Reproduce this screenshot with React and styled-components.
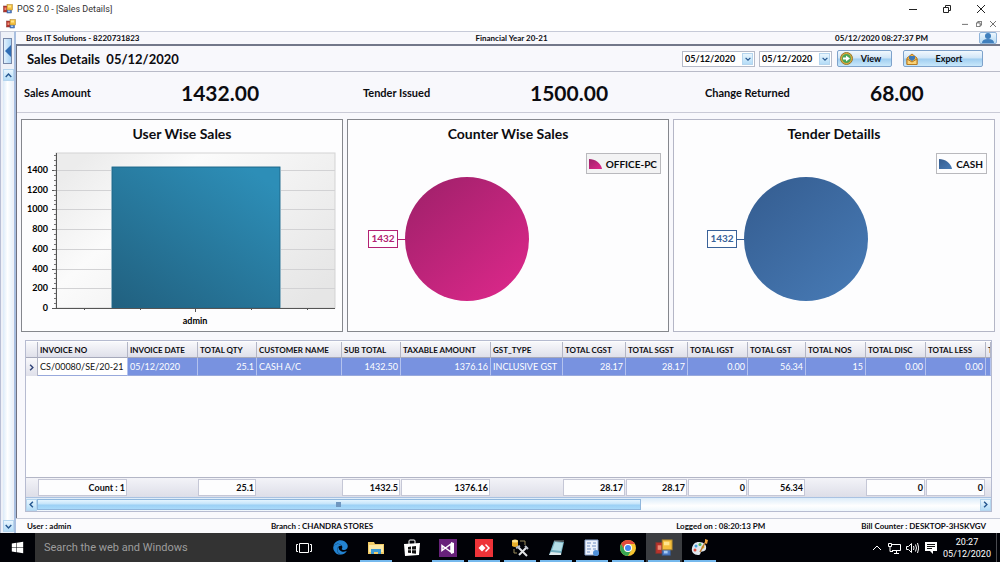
import React from "react";
import styled, { createGlobalStyle, css } from "styled-components";
import { FaEdge, FaWindows } from "react-icons/fa";

const GlobalStyle = createGlobalStyle`
  * {
    box-sizing: border-box;
  }
  body {
    margin: 0;
    background: #f8f8fc;
    color: #0c0c10;
    font: 700 9px/12px Lato, "Open Sans", sans-serif;
  }
  button, input {
    font: inherit;
    color: inherit;
    margin: 0;
  }
  svg {
    display: block;
  }
`;

const SPage = styled.div`
  min-height: 100vh;
  display: flex;
  flex-direction: column;
`;

const STitleBar = styled.header`
  display: flex;
  align-items: center;
  justify-content: space-between;
  height: 17px;
  padding: 0 13px 0 3px;
  background: #fff;
  font: 400 9px/12px Roboto, "Open Sans", sans-serif;
  color: #333;
`;

const SAppName = styled.div`
  display: flex;
  align-items: center;
  gap: 4px;
`;

const SWindowButtons = styled.div`
  display: flex;
  align-items: center;
  gap: ${({ $small }) => ($small ? 2 : 22)}px;
`;

const SWindowButton = styled.button`
  display: flex;
  align-items: center;
  justify-content: center;
  width: 12px;
  height: 12px;
  padding: 0;
  border: none;
  background: transparent;
`;

const SMdiBar = styled(STitleBar)`
  height: 14px;
  padding: 0 1px 0 6px;
`;

const SWorkspace = styled.div`
  flex: 1;
  display: flex;
`;

const SSideBar = styled.aside`
  display: flex;
  flex-direction: column;
  width: 16px;
  padding: 6px 2px 1px 2px;
  background: #eef1f8;
  border-left: 1px solid #b9bfd6;
  border-right: 2px solid #a9bfe0;
  border-top: 1px solid #c6cad8;
`;

const SCollapseButton = styled.button`
  display: flex;
  align-items: center;
  justify-content: center;
  height: 26px;
  margin-bottom: 5px;
  padding: 0;
  border: 1px solid #7787a8;
  background: linear-gradient(90deg, #e2f1fd, #a9d3f5);
`;

const SScrollArrow = styled.button`
  display: flex;
  align-items: center;
  justify-content: center;
  width: 11px;
  height: 12px;
  padding: 0;
  border: 1px solid #b5d5ee;
  background: linear-gradient(#e9f6fe, #b4dcf7);
  color: #24568f;
`;

const SSideTrack = styled.div`
  flex: 1;
  background: linear-gradient(90deg, #dcebf9, #ffffff 50%, #eaf4fc);
`;

const SMain = styled.main`
  flex: 1;
  min-width: 0;
  display: flex;
  flex-direction: column;
  border-top: 1px solid #c6cad8;
`;

const SInfoBar = styled.div`
  display: grid;
  grid-template-columns: 1fr auto 1fr;
  align-items: center;
  height: 12px;
  padding: 0 3px 0 10px;
  font-size: 8px;
`;

const SInfoRight = styled.div`
  display: flex;
  align-items: center;
  justify-content: flex-end;
  gap: 51px;
`;

const SUserButton = styled.button`
  display: flex;
  justify-content: center;
  width: 18px;
  height: 12px;
  padding: 0;
  border: 1px solid #8fb4da;
  border-radius: 2px;
  background: linear-gradient(#edf6fd, #b6daf4);
`;

const SForm = styled.section`
  flex: 1;
  display: flex;
  flex-direction: column;
  border-top: 2px solid #73788a;
  border-left: 1px solid #6d7080;
`;

const SToolbar = styled.div`
  display: flex;
  align-items: center;
  justify-content: space-between;
  height: 26px;
  padding: 0 17px 0 10px;
  border-bottom: 1px solid #b9bbc8;
`;

const SHeading = styled.h1`
  margin: 0;
  font-size: 13px;
  line-height: 18px;
  white-space: pre;
`;

const STools = styled.div`
  display: flex;
  align-items: center;
`;

const SDateBox = styled.div`
  display: flex;
  align-items: center;
  width: 73px;
  height: 16px;
  margin-right: 4px;
  padding: 1px;
  border: 1px solid #b5bac8;
  background: #fff;

  input {
    flex: 1;
    min-width: 0;
    padding: 0 1px;
    border: none;
    outline: none;
    background: transparent;
  }
`;

const SActionButton = styled.button`
  display: flex;
  align-items: center;
  width: ${({ $wide }) => ($wide ? 80 : 55)}px;
  height: 17px;
  margin-left: ${({ $wide }) => ($wide ? 11 : 1)}px;
  padding: 0 2px;
  border: 1px solid #7ea2cb;
  border-radius: 2px;
  background: linear-gradient(#f1f8fe, #cfe5f7 48%, #9fcdf0 52%, #c9e8fb);

  span {
    flex: 1;
    text-align: center;
  }
`;

const SSummary = styled.dl`
  display: grid;
  grid-template-columns: 157fr 182fr 167fr 175fr 165fr 122fr;
  align-items: center;
  height: 41px;
  margin: 0;
  padding: 2px 8px 0 7px;
  border-bottom: 1px solid #c9cad6;

  dt {
    font-size: 11px;
    line-height: 14px;
  }
  dd {
    margin: 0;
    font-size: 21px;
    line-height: 26px;
  }
`;

const SCharts = styled.div`
  display: flex;
  gap: 4px;
  padding: 6px 5px 0 4px;
`;

const SChartPanel = styled.section`
  flex: 1;
  min-width: 0;
  height: 213px;
  border: 1px solid ${({ $light }) => ($light ? "#b4b6c6" : "#85878d")};
  background: #fdfdfe;
`;

const SChartTitle = styled.h2`
  margin: 0;
  padding-top: 4px;
  height: 28px;
  font-size: 14px;
  line-height: 20px;
  text-align: center;
`;

const SPieArea = styled.div`
  display: flex;
  gap: 6px;
  padding: 5px 7px 0;
`;

const SPieSlot = styled.div`
  flex: 1;
  display: flex;
  justify-content: center;
  padding-top: 22px;
`;

const SLegend = styled.div`
  display: flex;
  align-items: center;
  align-self: flex-start;
  gap: 4px;
  height: 21px;
  padding: 0 3px 0 2px;
  border: 1px solid #b9b9bd;
  background: ${({ $shaded }) => ($shaded ? "#f3f3f4" : "#fdfdfe")};
  font-size: 10px;
`;

const SGrid = styled.section`
  flex: 1;
  display: flex;
  flex-direction: column;
  margin: 8px 8px 6px;
  border: 1px solid #b6bbd0;
  background: #fdfdfe;
`;

const SGridView = styled.div`
  flex: 1;
  display: grid;
  overflow: hidden;
  padding-top: 1px;
`;

const STable = styled.table`
  width: 100%;
  table-layout: fixed;
  border-collapse: separate;
  border-spacing: 0;
  white-space: nowrap;
`;

const headerLook = css`
  background: linear-gradient(#f8f8fb, #dfe0ea);
  border-right: 1px solid #b3b6c6;
`;

const SHeadCell = styled.th`
  ${headerLook}
  height: 16px;
  padding: 0 0 0 2px;
  border-bottom: 1px solid #a6a9bb;
  overflow: hidden;
  font-size: 8px;
  text-align: left;
`;

const SMarkerCell = styled.td`
  ${headerLook}
  padding: 0 2px;
  color: #2f4277;
`;

const SCell = styled.td`
  height: 18px;
  padding: 0 2px;
  overflow: hidden;
  border-right: 1px solid #b3c2ee;
  border-bottom: 1px solid #98a9dc;
  background: ${({ $focused }) => ($focused ? "#fff" : "#7892e0")};
  color: ${({ $focused }) => ($focused ? "#111" : "#fff")};
  font-weight: 400;
  text-align: ${({ $number }) => ($number ? "right" : "left")};
`;

const SFootCell = styled.td`
  height: 20px;
  padding: 1px 1px 1px 0;
  border-top: 1px solid #b3b6c6;
  background: linear-gradient(#f3f3f8, #dddee8);
`;

const STotal = styled.div`
  height: 17px;
  padding: 0 1px;
  border: 1px solid #c5c7d6;
  background: #fdfdfe;
  line-height: 15px;
  text-align: right;
`;

const SScrollBar = styled.div`
  display: flex;
  align-items: center;
  height: 14px;
  border-top: 1px solid #a9c2e2;
  background: linear-gradient(#dcecf9, #fff 60%, #eef6fc);
`;

const SScrollTrack = styled.div`
  flex: 1;
`;

const SScrollThumb = styled.div`
  display: flex;
  align-items: center;
  justify-content: center;
  width: 64%;
  height: 11px;
  border: 1px solid #8fb6dc;
  background: linear-gradient(#e4f4fe, #c4e4fa 45%, #9bd0f5 55%, #a9dafa);

  &::before {
    content: "";
    width: 5px;
    height: 5px;
    background: #6f97c0;
  }
`;

const SStatusBar = styled.footer`
  display: grid;
  grid-template-columns: 245fr 407fr 186fr auto;
  align-items: center;
  height: 15px;
  padding: 0 14px 0 11px;
  border-top: 1px solid #c6cad8;
  background: #fbfbfd;
  font-size: 8px;
`;

const STaskBar = styled.nav`
  display: flex;
  height: 29px;
  background: #010207;
  color: #fff;
  font: 400 9px/12px Roboto, "Open Sans", sans-serif;
`;

const SStartButton = styled.button`
  display: flex;
  align-items: center;
  justify-content: center;
  width: 35px;
  border: none;
  background: transparent;
`;

const SSearch = styled.input`
  width: 251px;
  padding: 0 9px;
  border: none;
  outline: none;
  background: #333;
  font-size: 11px;

  &::placeholder {
    color: #9d9d9d;
    opacity: 1;
  }
`;

const STaskButton = styled.button`
  display: flex;
  align-items: center;
  justify-content: center;
  width: 36px;
  padding: 2px 0 0;
  border: none;
  border-bottom: 2px solid transparent;
  background: ${({ $active }) => ($active ? "#3b3d41" : "transparent")};
  ${({ $running }) =>
    $running &&
    css`
      border-image: linear-gradient(90deg, transparent 10%, #76b9ed 10%, #76b9ed 90%, transparent 90%) 2;
    `}
`;

const STray = styled.div`
  display: flex;
  align-items: center;
  gap: 5px;
  margin-left: auto;
  padding-right: 4px;
`;

const STrayButton = styled(SWindowButton)`
  width: 13px;
  height: 16px;
`;

const SClock = styled.button`
  width: 50px;
  padding: 0;
  border: none;
  background: transparent;
  text-align: center;
`;

const SDesktopEdge = styled.div`
  width: 4px;
  border-left: 1px solid #4a4b50;
`;

const columns = [
  { title: "INVOICE NO", width: 90, value: "CS/00080/SE/20-21", total: "Count : 1" },
  { title: "INVOICE DATE", width: 70, value: "05/12/2020" },
  { title: "TOTAL QTY", width: 59, value: "25.1", total: "25.1", number: true },
  { title: "CUSTOMER NAME", width: 85, value: "CASH A/C" },
  { title: "SUB TOTAL", width: 59, value: "1432.50", total: "1432.5", number: true },
  { title: "TAXABLE AMOUNT", width: 90, value: "1376.16", total: "1376.16", number: true },
  { title: "GST_TYPE", width: 72, value: "INCLUSIVE GST" },
  { title: "TOTAL CGST", width: 63, value: "28.17", total: "28.17", number: true },
  { title: "TOTAL SGST", width: 62, value: "28.17", total: "28.17", number: true },
  { title: "TOTAL IGST", width: 60, value: "0.00", total: "0", number: true },
  { title: "TOTAL GST", width: 58, value: "56.34", total: "56.34", number: true },
  { title: "TOTAL NOS", width: 60, value: "15", number: true },
  { title: "TOTAL DISC", width: 60, value: "0.00", total: "0", number: true },
  { title: "TOTAL LESS", width: 60, value: "0.00", total: "0", number: true },
];

const summary = [
  ["Sales Amount", "1432.00"],
  ["Tender Issued", "1500.00"],
  ["Change Returned", "68.00"],
];

const PosIcon = ({ size = 10 }) => (
  <svg width={size} height={size} viewBox="0 0 20 20" aria-hidden="true">
    <rect x="1" y="4" width="9" height="12" fill="#b9332b" stroke="#7e3631" />
    <rect x="3" y="7" width="4" height="5" fill="#ef8a74" />
    <rect x="8" y="11" width="9" height="7" fill="#4f7fcb" stroke="#365991" />
    <rect x="10" y="13" width="4" height="3" fill="#a8ccf5" />
    <rect x="8" y="1" width="11" height="11" fill="#f4bf3d" stroke="#a7802d" />
    <rect x="10" y="3" width="6" height="4" fill="#ffe58c" />
  </svg>
);

const Chevron = ({ dir = "down", size = 7, color = "#24568f", weight = 2 }) => {
  const paths = {
    down: "M1 3 L5 7 L9 3",
    up: "M1 7 L5 3 L9 7",
    left: "M7 1 L3 5 L7 9",
    right: "M3 1 L7 5 L3 9",
  };
  return (
    <svg width={size} height={size} viewBox="0 0 10 10" aria-hidden="true">
      <path d={paths[dir]} fill="none" stroke={color} strokeWidth={weight} />
    </svg>
  );
};

const WindowGlyph = ({ kind, size = 8, color = "#222" }) => (
  <svg width={size} height={size} viewBox="0 0 8 8" fill="none" stroke={color} aria-hidden="true">
    {kind === "min" && <path d="M0 4.5H8" />}
    {kind === "max" && <path d="M.5 2.5h5v5h-5zM2.5 2.5v-2h5v5h-2" />}
    {kind === "close" && <path d="M0 0L8 8M8 0L0 8" />}
  </svg>
);

const WindowControls = ({ small }) => (
  <SWindowButtons $small={small}>
    {["min", "max", "close"].map((kind) => (
      <SWindowButton key={kind} aria-label={kind}>
        <WindowGlyph kind={kind} size={small ? 6 : 8} color={small ? "#444" : "#222"} />
      </SWindowButton>
    ))}
  </SWindowButtons>
);

const DateBox = ({ label, value }) => (
  <SDateBox>
    <input aria-label={label} defaultValue={value} />
    <SScrollArrow aria-label={`Open ${label}`}>
      <Chevron size={6} />
    </SScrollArrow>
  </SDateBox>
);

const BarChart = () => {
  const base = 160;
  const yOf = (value) => base - Math.round((value * 138) / 1400);
  const labels = [0, 200, 400, 600, 800, 1000, 1200, 1400];
  const minor = Array.from({ length: 31 }, (_, i) => (i + 1) * 50);
  return (
    <svg width="100%" height="182" viewBox="0 0 320 182" role="img" aria-label="User wise sales">
      <defs>
        <linearGradient id="plot" x1="0" y1="0.2" x2="1" y2="0.8">
          <stop offset="0" stopColor="#ececec" />
          <stop offset="0.3" stopColor="#fbfbfb" />
          <stop offset="1" stopColor="#e6e6e6" />
        </linearGradient>
        <linearGradient id="bar" x1="0" y1="1" x2="0.8" y2="0">
          <stop offset="0" stopColor="#21607f" />
          <stop offset="1" stopColor="#2d8eb7" />
        </linearGradient>
      </defs>
      <rect x="34" y="5" width="279" height="155" fill="url(#plot)" stroke="#d3d3d3" />
      {labels.map((value) => (
        <g key={value}>
          <path d={`M35 ${yOf(value)}.5H313`} stroke="#d2d2d4" />
          <path d={`M30 ${yOf(value)}.5H35`} stroke="#555" />
          <text x="26" y={yOf(value) + 3} textAnchor="end" fontSize="9">
            {value}
          </text>
        </g>
      ))}
      {minor.map((value) => (
        <path key={value} d={`M32 ${yOf(value)}.5H35`} stroke="#777" />
      ))}
      <rect x="89" y={yOf(1432) - 1} width="170" height={base - yOf(1432) + 1} fill="#fff" />
      <rect x="90" y={yOf(1432)} width="168" height={base - yOf(1432)} fill="url(#bar)" stroke="#1f6788" />
      <path d="M34.5 5V160.5H313" fill="none" stroke="#555" />
      <path d="M62.5 160v2M118.5 160v2M173.5 160v4M229.5 160v2M285.5 160v2" stroke="#555" />
      <text x="173" y="176" textAnchor="middle" fontSize="9">
        admin
      </text>
    </svg>
  );
};

const PieChart = ({ id, value, legend, from, to, line, shaded }) => (
  <SPieArea>
    <SPieSlot>
      <svg width="200" height="130" viewBox="0 0 200 130" role="img" aria-label={`${legend} ${value}`}>
        <defs>
          <linearGradient id={id} x1="0.1" y1="0.1" x2="0.8" y2="0.9">
            <stop offset="0" stopColor={from} />
            <stop offset="1" stopColor={to} />
          </linearGradient>
        </defs>
        <path d="M30 64.5H40" stroke={line} />
        <circle cx="100" cy="64" r="62" fill={`url(#${id})`} />
        <rect x="1.5" y="55.5" width="29" height="17" fill="#fff" stroke={line} />
        <text x="16" y="67" textAnchor="middle" fontSize="10" fill={line}>
          {value}
        </text>
      </svg>
    </SPieSlot>
    <SLegend $shaded={shaded}>
      <svg width="13" height="10" viewBox="0 0 13 10" aria-hidden="true">
        <path d="M0 10V0C6 0 12 4 13 10Z" fill={`url(#${id})`} />
      </svg>
      {legend}
    </SLegend>
  </SPieArea>
);

const InvoiceGrid = () => (
  <SGrid>
    <SGridView>
      <STable>
        <colgroup>
          <col style={{ width: 12 }} />
          {columns.map(({ title, width }) => (
            <col key={title} style={{ width }} />
          ))}
          <col />
        </colgroup>
        <thead>
          <tr>
            <SHeadCell aria-label="Row marker" />
            {columns.map(({ title }) => (
              <SHeadCell key={title}>{title}</SHeadCell>
            ))}
            <SHeadCell>T</SHeadCell>
          </tr>
        </thead>
        <tbody>
          <tr>
            <SMarkerCell>
              <Chevron dir="right" size={7} color="#2f4277" />
            </SMarkerCell>
            {columns.map(({ title, value, number }, index) => (
              <SCell key={title} $number={number} $focused={index === 0}>
                {value}
              </SCell>
            ))}
            <SCell />
          </tr>
          <tr>
            <td colSpan={columns.length + 2} />
          </tr>
        </tbody>
        <tfoot>
          <tr>
            <SFootCell />
            {columns.map(({ title, total }) => (
              <SFootCell key={title}>{total && <STotal>{total}</STotal>}</SFootCell>
            ))}
            <SFootCell />
          </tr>
        </tfoot>
      </STable>
    </SGridView>
    <SScrollBar>
      <SScrollArrow aria-label="Scroll left">
        <Chevron dir="left" />
      </SScrollArrow>
      <SScrollTrack>
        <SScrollThumb />
      </SScrollTrack>
      <SScrollArrow aria-label="Scroll right">
        <Chevron dir="right" />
      </SScrollArrow>
    </SScrollBar>
  </SGrid>
);

const taskItems = [
  {
    name: "Task View",
    icon: (
      <svg width="16" height="12" viewBox="0 0 16 12" fill="none" stroke="#fff">
        <path d="M3.5 1.5h9v9h-9zM2 2.5H.5v7H2M14 2.5h1.5v7H14" />
      </svg>
    ),
  },
  { name: "Edge", icon: <FaEdge size={15} color="#2383d1" /> },
  {
    name: "File Explorer",
    running: true,
    icon: (
      <svg width="16" height="14" viewBox="0 0 16 14">
        <path d="M0 1h6l1 2h9v10H0z" fill="#f2cc67" />
        <path d="M1 4h14v7H1z" fill="#fce9a6" />
        <path d="M3 13V8h10v5h-3v-2H6v2z" fill="#3e9bd4" />
      </svg>
    ),
  },
  {
    name: "Store",
    icon: (
      <svg width="16" height="17" viewBox="0 0 16 17">
        <path d="M5 5V2q0-1 1-1h4q1 0 1 1v3" fill="none" stroke="#fff" />
        <path d="M0 5l16-1-1 12-14 1z" fill="#fff" />
        <path d="M4 8l3-.4v2.8H4zM8 7.500l4-.5v3.400H8zM4 11.300h3v2.800l-3-.4zM8 11.300h4v3.400l-4-.5z" fill="#111" />
      </svg>
    ),
  },
  {
    name: "Visual Studio",
    running: true,
    icon: (
      <svg width="18" height="18" viewBox="0 0 18 18">
        <rect width="18" height="18" fill="#68217a" />
        <path d="M3 6.500v5l3-2.500zM3 6.500l9 6.500V5L3 11.500" fill="none" stroke="#fff" strokeWidth="1.500" />
        <path d="M12 3l3 1v10l-3 1z" fill="#fff" />
      </svg>
    ),
  },
  {
    name: "AnyDesk",
    running: true,
    icon: (
      <svg width="18" height="18" viewBox="0 0 18 18">
        <rect width="18" height="18" fill="#ee3338" />
        <path d="M7 5.500L10.500 9 7 12.500 3.500 9z" fill="#fff" />
        <path d="M10 6l1-1 4 4-4 4-1-1 3-3z" fill="#fff" />
      </svg>
    ),
  },
  {
    name: "SQL Tools",
    running: true,
    icon: (
      <svg width="18" height="18" viewBox="0 0 18 18" fill="none">
        <path d="M1 2v5q3 2 6 0V2z" fill="#e7ae29" />
        <ellipse cx="4" cy="2" rx="3" ry="1.500" fill="#ffe38a" />
        <path d="M9 2h5v4M3 10v4h3" stroke="#9a8a5a" />
        <path d="M7 8l9 9M8 16l8-8" stroke="#e0e2e5" strokeWidth="2" />
        <path d="M5 9l4-2M14 7l3 3" stroke="#b9bec6" strokeWidth="2" />
      </svg>
    ),
  },
  {
    name: "Notepad",
    running: true,
    icon: (
      <svg width="17" height="16" viewBox="0 0 17 16">
        <path d="M6 1l10 1-3 13H1z" fill="#73aebf" />
        <path d="M7 2l8 1-2 8-9-1z" fill="#b5dde6" />
        <path d="M1 15l2-3 10 1v2z" fill="#dfe9ec" />
        <path d="M6 1h10" stroke="#8b9294" />
      </svg>
    ),
  },
  {
    name: "Report",
    running: true,
    icon: (
      <svg width="16" height="18" viewBox="0 0 16 18">
        <path d="M1 1h13v15H1z" fill="#eef3fb" stroke="#8ba5cf" />
        <path d="M3 4h4M3 7h3M3 10h4M3 13h3M9 4h3M8 7h4M9 10h3" stroke="#6e8dc2" />
        <circle cx="12" cy="14" r="3" fill="#4e90d8" />
      </svg>
    ),
  },
  {
    name: "Chrome",
    running: true,
    icon: (
      <svg width="16" height="16" viewBox="0 0 16 16">
        <circle cx="8" cy="8" r="8" fill="#f6c431" />
        <path d="M1.100 4A8 8 0 0 1 14.900 4H8a4 4 0 0 0-3.500 6z" fill="#e14a3b" />
        <path d="M1.100 4A8 8 0 0 0 8 16l3.500-6a4 4 0 0 1-7 0z" fill="#37a552" />
        <circle cx="8" cy="8" r="4" fill="#fff" />
        <circle cx="8" cy="8" r="3" fill="#4486ef" />
      </svg>
    ),
  },
  { name: "POS", running: true, active: true, icon: <PosIcon size={18} /> },
  {
    name: "Paint",
    running: true,
    icon: (
      <svg width="18" height="17" viewBox="0 0 18 17">
        <path d="M8 3c5 0 8 3 7 7-1 3-4 2-5 3s0 3-3 3c-4 0-7-3-6-7s3-6 7-6z" fill="#dfe6ee" />
        <circle cx="5" cy="7" r="1.500" fill="#46a1e0" />
        <circle cx="9" cy="5.500" r="1.500" fill="#4db357" />
        <circle cx="4" cy="11" r="1.500" fill="#e14c3c" />
        <circle cx="12" cy="8" r="1.500" fill="#e8b62c" />
        <path d="M15 2L9 13" stroke="#b97a2b" strokeWidth="1.500" />
        <path d="M14 0l3 1-1 4-2-1z" fill="#f0a33c" />
      </svg>
    ),
  },
];

const TaskBar = () => (
  <STaskBar aria-label="Taskbar">
    <SStartButton aria-label="Start">
      <FaWindows size={13} />
    </SStartButton>
    <SSearch aria-label="Search" placeholder="Search the web and Windows" />
    {taskItems.map(({ name, icon, running, active }) => (
      <STaskButton key={name} aria-label={name} $running={running} $active={active}>
        {icon}
      </STaskButton>
    ))}
    <STray>
      <STrayButton aria-label="Show hidden icons">
        <Chevron dir="up" size={10} color="#fff" weight={1} />
      </STrayButton>
      <STrayButton aria-label="Network">
        <svg width="13" height="12" viewBox="0 0 13 12" fill="none" stroke="#fff">
          <path d="M4 2.500h8.500v6H4M6 11.500h5M8.500 8.500v3M.5 1.500h3v3h-3zM2 4.500v5h3" />
        </svg>
      </STrayButton>
      <STrayButton aria-label="Volume">
        <svg width="13" height="12" viewBox="0 0 13 12" fill="none" stroke="#fff">
          <path d="M.5 4.500h2l3-3v9l-3-3h-2zM7.500 4q1 2 0 4M9.500 2.500q2 3.500 0 7M11.500 1q2.500 5 0 10" />
        </svg>
      </STrayButton>
      <STrayButton aria-label="Notifications">
        <svg width="12" height="12" viewBox="0 0 12 12">
          <path d="M0 0h12v9H8v3L5 9H0z" fill="#fff" />
          <path d="M2 2.500h8M2 4.500h8M2 6.500h5" stroke="#111" />
        </svg>
      </STrayButton>
      <SClock>
        20:27
        <br />
        05/12/2020
      </SClock>
    </STray>
    <SDesktopEdge />
  </STaskBar>
);

const App = () => (
  <SPage>
    <GlobalStyle />
    <STitleBar>
      <SAppName>
        <PosIcon />
        POS 2.0 - [Sales Details]
      </SAppName>
      <WindowControls />
    </STitleBar>
    <SMdiBar as="div">
      <PosIcon />
      <WindowControls small />
    </SMdiBar>
    <SWorkspace>
      <SSideBar>
        <SCollapseButton aria-label="Collapse menu">
          <svg width="6" height="12" viewBox="0 0 6 12" aria-hidden="true">
            <path d="M6 0v12L0 6z" fill="#2f6db5" />
          </svg>
        </SCollapseButton>
        <SScrollArrow aria-label="Scroll up">
          <Chevron dir="up" />
        </SScrollArrow>
        <SSideTrack />
        <SScrollArrow aria-label="Scroll down">
          <Chevron />
        </SScrollArrow>
      </SSideBar>
      <SMain>
        <SInfoBar>
          <span>Bros IT Solutions - 8220731823</span>
          <span>Financial Year 20-21</span>
          <SInfoRight>
            <span>05/12/2020 08:27:37 PM</span>
            <SUserButton aria-label="User">
              <svg width="12" height="10" viewBox="0 0 12 10" aria-hidden="true">
                <circle cx="6" cy="3" r="3" fill="#3f7fbd" />
                <path d="M0 10q0-4 6-4t6 4z" fill="#3f7fbd" />
              </svg>
            </SUserButton>
          </SInfoRight>
        </SInfoBar>
        <SForm>
          <SToolbar>
            <SHeading>{"Sales Details  05/12/2020"}</SHeading>
            <STools>
              <DateBox label="from date" value="05/12/2020" />
              <DateBox label="to date" value="05/12/2020" />
              <SActionButton>
                <svg width="13" height="13" viewBox="0 0 13 13" aria-hidden="true">
                  <circle cx="6.500" cy="6.500" r="6" fill="#e5a83c" stroke="#8d7b34" />
                  <circle cx="6.500" cy="6.500" r="4.500" fill="#4aa657" />
                  <path d="M3 5.500h3v-2l4 3-4 3v-2H3z" fill="#fff" />
                </svg>
                <span>View</span>
              </SActionButton>
              <SActionButton $wide>
                <svg width="12" height="12" viewBox="0 0 12 12" aria-hidden="true">
                  <path d="M1 5l5-4 5 4v6.500H1z" fill="#f3b545" stroke="#b67a22" />
                  <path d="M3 3h6v3L6 8 3 6z" fill="#3e79b7" />
                  <path d="M1 6l5 3 5-3v5.500H1z" fill="#fbd376" stroke="#b67a22" />
                </svg>
                <span>Export</span>
              </SActionButton>
            </STools>
          </SToolbar>
          <SSummary>
            {summary.map(([label, value]) => (
              <React.Fragment key={label}>
                <dt>{label}</dt>
                <dd>{value}</dd>
              </React.Fragment>
            ))}
          </SSummary>
          <SCharts>
            <SChartPanel>
              <SChartTitle>User Wise Sales</SChartTitle>
              <BarChart />
            </SChartPanel>
            <SChartPanel>
              <SChartTitle>Counter Wise Sales</SChartTitle>
              <PieChart
                id="counter"
                value="1432"
                legend="OFFICE-PC"
                from="#a3216c"
                to="#d62787"
                line="#b32273"
                shaded
              />
            </SChartPanel>
            <SChartPanel $light>
              <SChartTitle>Tender Detaills</SChartTitle>
              <PieChart
                id="tender"
                value="1432"
                legend="CASH"
                from="#365f93"
                to="#4577b1"
                line="#3a6299"
              />
            </SChartPanel>
          </SCharts>
          <InvoiceGrid />
        </SForm>
        <SStatusBar>
          <span>User : admin</span>
          <span>Branch : CHANDRA STORES</span>
          <span>Logged on : 08:20:13 PM</span>
          <span>Bill Counter : DESKTOP-3HSKVGV</span>
        </SStatusBar>
      </SMain>
    </SWorkspace>
    <TaskBar />
  </SPage>
);

export default App;
